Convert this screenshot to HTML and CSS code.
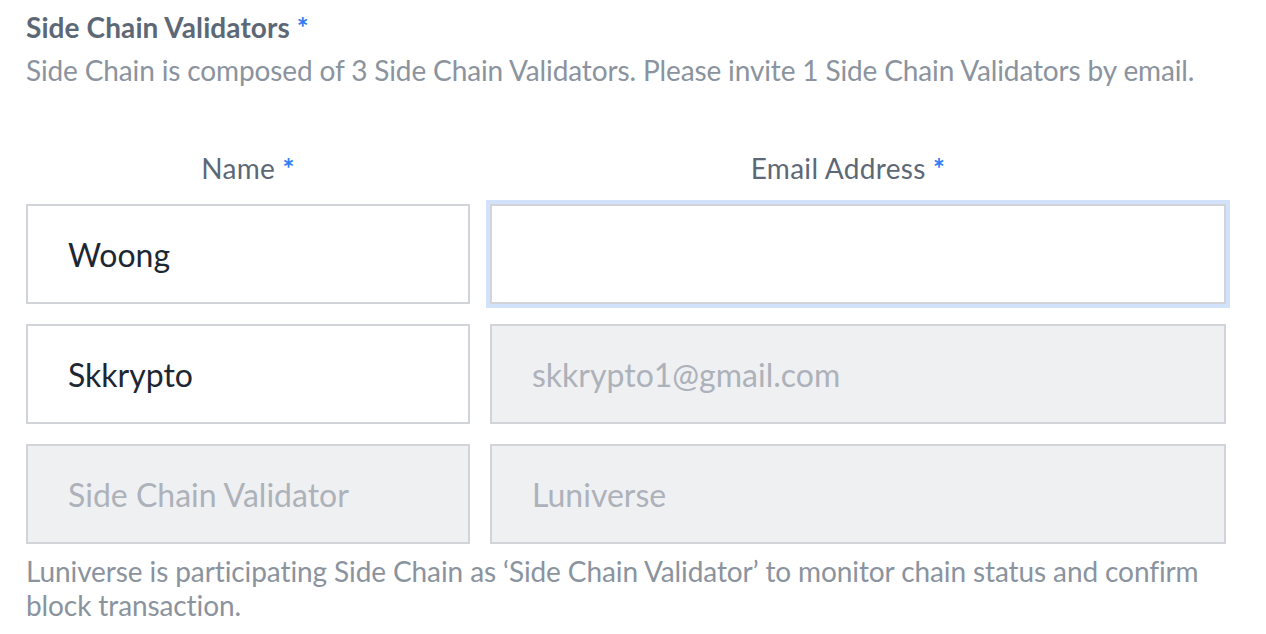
FILE: index.html
```html
<!DOCTYPE html>
<html>
<head>
<meta charset="utf-8">
<link rel="stylesheet" href="styles.css">
</head>
<body>
<div class="section">
  <h2 class="title">Side Chain Validators <span class="req">*</span></h2>
  <p class="desc">Side Chain is composed of 3 Side Chain Validators. Please invite 1 Side Chain Validators by email.</p>
  <div class="grid">
    <div class="label">Name <span class="req">*</span></div>
    <div class="label label-email">Email Address <span class="req">*</span></div>
    <div class="field">Woong</div>
    <div class="field focused"></div>
    <div class="field">Skkrypto</div>
    <div class="field disabled">skkrypto1@gmail.com</div>
    <div class="field disabled">Side Chain Validator</div>
    <div class="field disabled">Luniverse</div>
  </div>
  <p class="note">Luniverse is participating Side Chain as ‘Side Chain Validator’ to monitor chain status and confirm block transaction.</p>
</div>
</body>
</html>
```
FILE: styles.css
```css
body {
  margin: 0;
  background: #fff;
  font-family: Lato, "Open Sans", "Liberation Sans", sans-serif;
}
.section {
  width: 1200px;
  padding: 10px 0 0 26px;
}
.title {
  margin: 0;
  font-size: 28px;
  font-weight: 700;
  line-height: 34px;
  color: #5d6877;
  letter-spacing: 0.1px;
}
.req {
  color: #2f7cf6;
  font-weight: 700;
}
.desc {
  margin: 9px 0 0;
  font-size: 28px;
  line-height: 34px;
  color: #8a939e;
  letter-spacing: -0.13px;
}
.grid {
  margin-top: 64px;
  display: grid;
  grid-template-columns: 444px 1fr;
  column-gap: 20px;
  row-gap: 20px;
}
.label {
  text-align: center;
  font-size: 28px;
  line-height: 34px;
  color: #5d6877;
  margin-bottom: -1px;
  letter-spacing: 0.3px;
}
.label-email {
  padding-right: 20px;
}
.field {
  box-sizing: border-box;
  height: 100px;
  border: 2px solid #d1d4d8;
  background: #fff;
  padding: 0 40px;
  display: flex;
  align-items: center;
  font-size: 32px;
  color: #1d2733;
}
.field.focused {
  box-shadow: 0 0 0 4px #d1e2fa;
}
.field.disabled {
  background: #eff0f2;
  color: #adb2ba;
}
.note {
  margin: 10px 0 0;
  font-size: 28px;
  line-height: 34px;
  color: #8a939e;
  letter-spacing: -0.1px;
}
```
